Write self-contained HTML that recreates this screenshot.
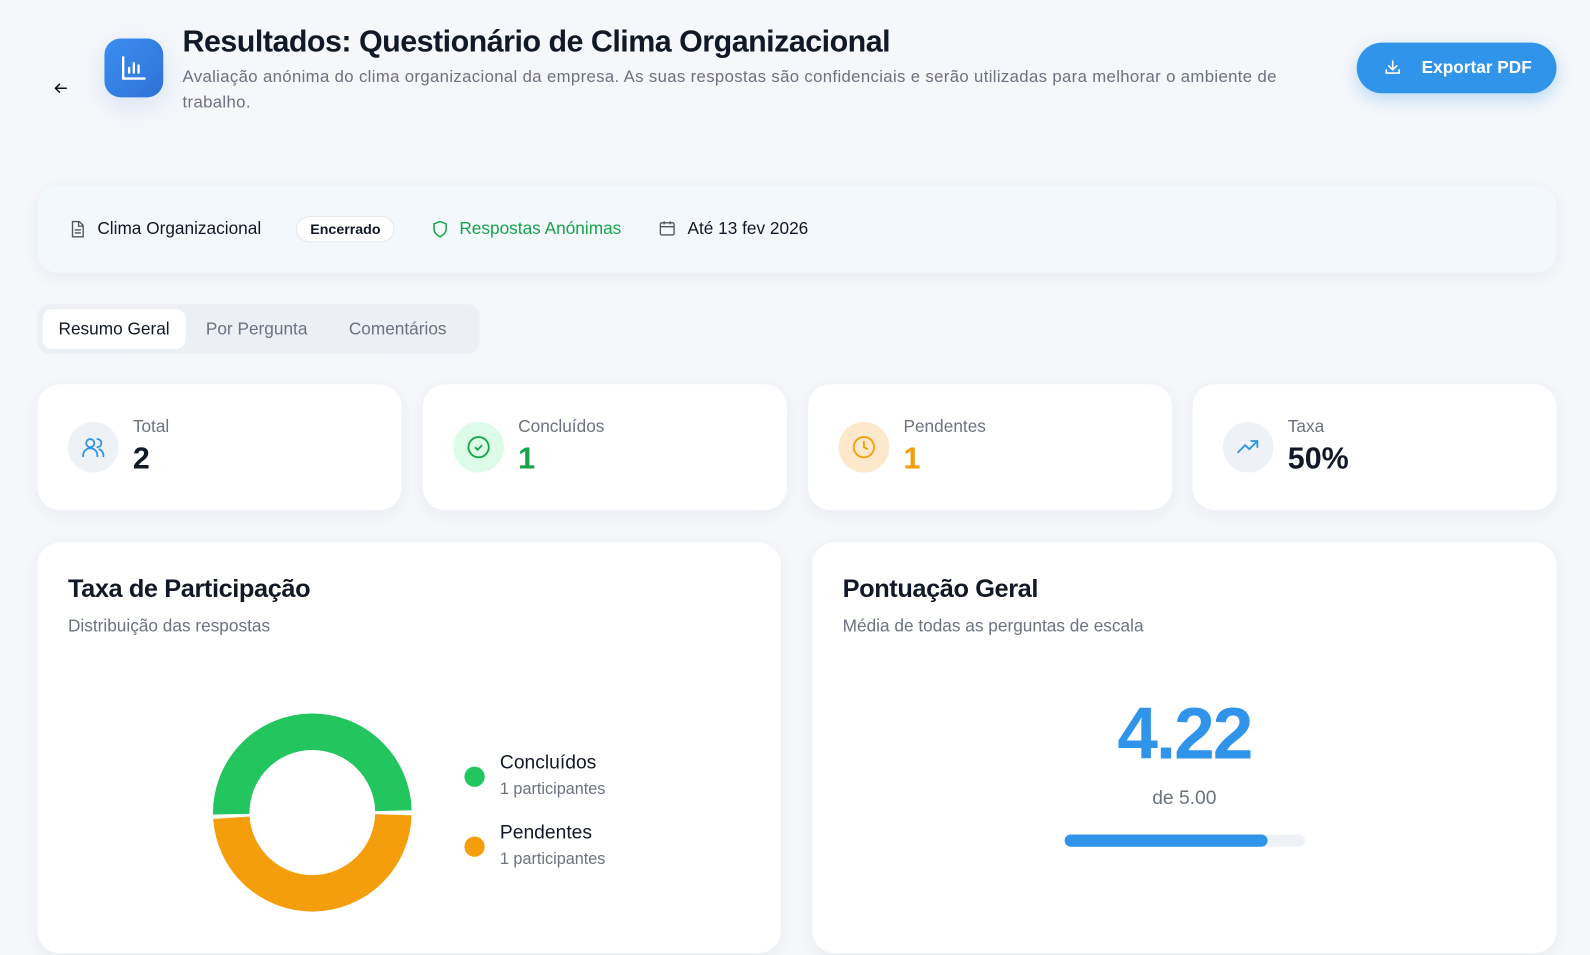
<!DOCTYPE html><html><head><meta charset="utf-8"><style>
*{box-sizing:border-box;margin:0;padding:0}
body{width:1590px;height:955px;background:#f5f7fa;font-family:"Liberation Sans",sans-serif;color:#111827;overflow:hidden;position:relative}
#w{position:absolute;left:0;top:0;width:1568px;height:942px;transform:scale(1.014);transform-origin:0 0}
.abs{position:absolute}
.card{position:absolute;background:#fff;border-radius:22px;box-shadow:0 4px 16px rgba(30,50,90,.06)}
.muted{color:#6b7280}
</style></head><body><div id="w">
<svg class="abs" style="left:52px;top:79px" width="16" height="16" viewBox="0 0 24 24" fill="none" stroke="#111" stroke-width="2.2" stroke-linecap="round"><path d="M20 12H4M10 6l-6 6 6 6"/></svg>
<div class="abs" style="left:103px;top:38px;width:58px;height:58px;border-radius:16px;background:linear-gradient(135deg,#3b8ef0,#2f72d6);box-shadow:0 8px 24px rgba(47,114,214,.15)">
<svg style="position:absolute;left:15px;top:15px" width="28" height="28" viewBox="0 0 24 24" fill="none" stroke="#fff" stroke-width="2" stroke-linecap="round"><path d="M3 3v18h18M8 16v-4M12 16V8M16 16v-6"/></svg></div>
<div class="abs" style="left:180px;top:25px;font-size:30px;font-weight:700;letter-spacing:-0.5px">Resultados: Questionário de Clima Organizacional</div>
<div class="abs muted" style="left:180px;top:64px;width:1160px;font-size:16.5px;line-height:25px;letter-spacing:0.35px">Avaliação anónima do clima organizacional da empresa. As suas respostas são confidenciais e serão utilizadas para melhorar o ambiente de<br>trabalho.</div>
<div class="abs" style="left:1338px;top:42px;width:197px;height:50px;border-radius:25px;background:#2f94ea;color:#fff;font-weight:700;font-size:17px;line-height:50px;padding-left:64px;box-shadow:0 6px 16px rgba(47,148,234,.3)">Exportar PDF
<svg style="position:absolute;left:26px;top:15px" width="19" height="19" viewBox="0 0 24 24" fill="none" stroke="#fff" stroke-width="2" stroke-linecap="round"><path d="M4 15v4h16v-4M12 4v11M7 10l5 5 5-5"/></svg></div>

<div class="card" style="left:37px;top:183px;width:1498px;height:86px;background:#f3f8fd;border-radius:20px;font-size:17px">
<svg class="abs" style="left:30px;top:34px" width="18" height="18" viewBox="0 0 24 24" fill="none" stroke="#555" stroke-width="1.8"><path d="M6 2h9l5 5v15H6zM14 2v6h6M9 13h8M9 17h8"/></svg>
<div class="abs" style="left:59px;top:33px">Clima Organizacional</div>
<div class="abs" style="left:255px;top:30px;height:26px;border:1px solid #e2e6ea;border-radius:13px;padding:0 13px;font-size:14px;font-weight:700;line-height:24px;background:#fff">Encerrado</div>
<svg class="abs" style="left:388px;top:34px" width="18" height="18" viewBox="0 0 24 24" fill="none" stroke="#16a34a" stroke-width="2"><path d="M12 2l8 3v7c0 5-4 8-8 10-4-2-8-5-8-10V5z"/></svg>
<div class="abs" style="left:416px;top:33px;color:#16a34a">Respostas Anónimas</div>
<svg class="abs" style="left:612px;top:33px" width="18" height="18" viewBox="0 0 24 24" fill="none" stroke="#555" stroke-width="1.8"><rect x="3" y="5" width="18" height="16" rx="2"/><path d="M3 10h18M8 3v4M16 3v4"/></svg>
<div class="abs" style="left:641px;top:33px">Até 13 fev 2026</div>
</div>

<div class="abs" style="left:37px;top:300px;width:436px;height:49px;background:#eceff3;border-radius:12px;font-size:17px">
<div class="abs" style="left:5px;top:5px;width:141px;height:39px;background:#fff;border-radius:9px;line-height:39px;text-align:center">Resumo Geral</div>
<div class="abs muted" style="left:166px;top:15px">Por Pergunta</div>
<div class="abs muted" style="left:307px;top:15px">Comentários</div>
</div>

<div class="card" style="left:37px;top:379px;width:359px;height:124px">
<div class="abs" style="left:30px;top:37px;width:50px;height:50px;border-radius:50%;background:#eef2f7"></div>
<svg class="abs" style="left:43px;top:50px" width="24" height="24" viewBox="0 0 24 24" fill="none" stroke="#2f94ea" stroke-width="1.8" stroke-linecap="round"><circle cx="9" cy="8" r="4"/><path d="M2 21v-1a7 7 0 0 1 14 0v1M16 4a4 4 0 0 1 0 8M22 21v-1a7 7 0 0 0-4-6"/></svg>
<div class="abs muted" style="left:94px;top:32px;font-size:17px">Total</div>
<div class="abs" style="left:94px;top:57px;font-size:30px;font-weight:700">2</div></div>
<div class="card" style="left:417px;top:379px;width:359px;height:124px">
<div class="abs" style="left:30px;top:37px;width:50px;height:50px;border-radius:50%;background:#dcfce7"></div>
<svg class="abs" style="left:43px;top:50px" width="24" height="24" viewBox="0 0 24 24" fill="none" stroke="#16a34a" stroke-width="1.8"><circle cx="12" cy="12" r="10"/><path d="M8.5 12l2.5 2.5 4.5-4.5"/></svg>
<div class="abs muted" style="left:94px;top:32px;font-size:17px">Concluídos</div>
<div class="abs" style="left:94px;top:57px;font-size:30px;font-weight:700;color:#16a34a">1</div></div>
<div class="card" style="left:797px;top:379px;width:359px;height:124px">
<div class="abs" style="left:30px;top:37px;width:50px;height:50px;border-radius:50%;background:#fde8cc"></div>
<svg class="abs" style="left:43px;top:50px" width="24" height="24" viewBox="0 0 24 24" fill="none" stroke="#f59e0b" stroke-width="1.8"><circle cx="12" cy="12" r="10"/><path d="M12 6v6l4 2"/></svg>
<div class="abs muted" style="left:94px;top:32px;font-size:17px">Pendentes</div>
<div class="abs" style="left:94px;top:57px;font-size:30px;font-weight:700;color:#f59e0b">1</div></div>
<div class="card" style="left:1176px;top:379px;width:359px;height:124px">
<div class="abs" style="left:30px;top:37px;width:50px;height:50px;border-radius:50%;background:#eef2f7"></div>
<svg class="abs" style="left:43px;top:50px" width="24" height="24" viewBox="0 0 24 24" fill="none" stroke="#2f94ea" stroke-width="1.8" stroke-linecap="round"><path d="M2 17l7-7 4 4 8-8M15 6h6v6"/></svg>
<div class="abs muted" style="left:94px;top:32px;font-size:17px">Taxa</div>
<div class="abs" style="left:94px;top:57px;font-size:30px;font-weight:700">50%</div></div>

<div class="card" style="left:37px;top:535px;width:733px;height:405px">
<div class="abs" style="left:30px;top:32px;font-size:25px;font-weight:700;letter-spacing:-0.4px">Taxa de Participação</div>
<div class="abs muted" style="left:30px;top:73px;font-size:17px">Distribuição das respostas</div>
<svg class="abs" style="left:171px;top:166px" width="200" height="200" viewBox="0 0 200 200" fill="none" stroke-width="36">
<path d="M20.03 102 A80 80 0 0 1 179.99 98.5" stroke="#22c55e"/>
<path d="M179.96 102.5 A80 80 0 0 1 20.19 105.5" stroke="#f59e0b"/>
</svg>
<div class="abs" style="left:421px;top:221px;width:20px;height:20px;border-radius:50%;background:#22c55e"></div>
<div class="abs" style="left:456px;top:207px;font-size:19px">Concluídos</div>
<div class="abs muted" style="left:456px;top:235px;font-size:16px">1 participantes</div>
<div class="abs" style="left:421px;top:290px;width:20px;height:20px;border-radius:50%;background:#f59e0b"></div>
<div class="abs" style="left:456px;top:276px;font-size:19px">Pendentes</div>
<div class="abs muted" style="left:456px;top:304px;font-size:16px">1 participantes</div>
</div>
<div class="card" style="left:801px;top:535px;width:734px;height:405px">
<div class="abs" style="left:30px;top:32px;font-size:25px;font-weight:700;letter-spacing:-0.4px">Pontuação Geral</div>
<div class="abs muted" style="left:30px;top:73px;font-size:17px">Média de todas as perguntas de escala</div>
<div class="abs" style="left:0;width:734px;top:148px;text-align:center;font-size:72px;font-weight:700;color:#2f94ea;letter-spacing:-2px">4.22</div>
<div class="abs muted" style="left:0;width:734px;top:242px;text-align:center;font-size:19px">de 5.00</div>
<div class="abs" style="left:249px;top:288px;width:237px;height:12px;border-radius:6px;background:#eef2f7"><div style="width:200px;height:12px;border-radius:6px;background:#2f94ea"></div></div>
</div>
</div></body></html>
